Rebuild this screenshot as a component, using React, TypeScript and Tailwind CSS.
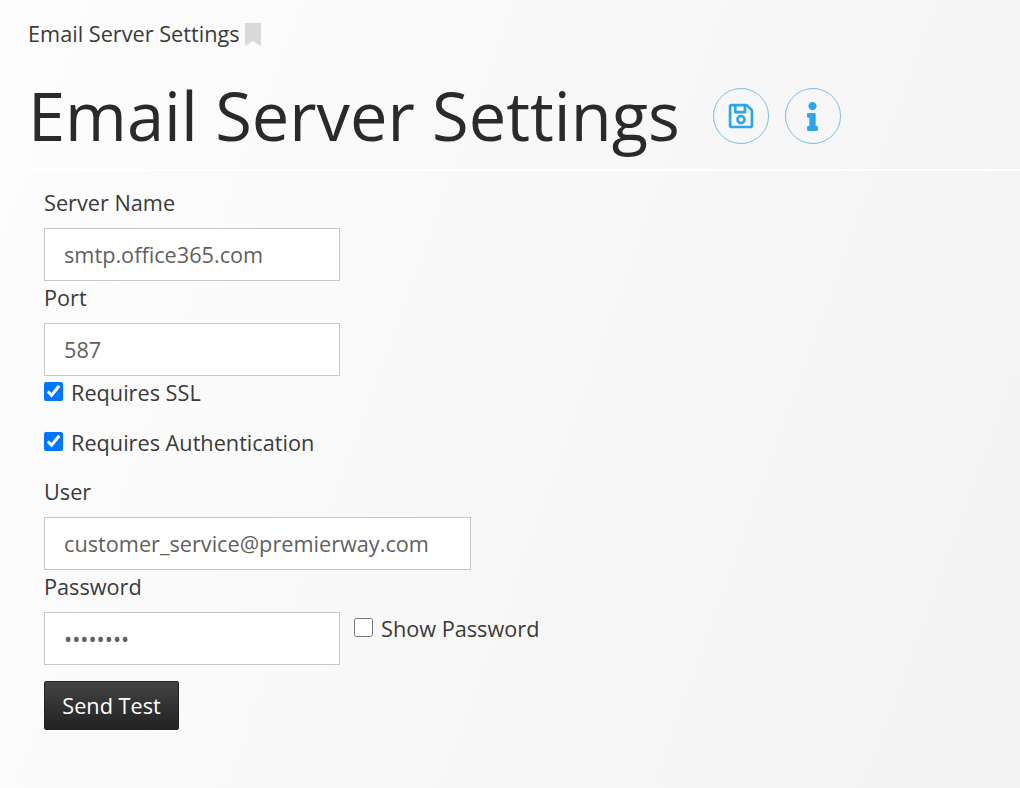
import React from "react";
import { FaRegSave, FaInfo } from "react-icons/fa";

function Field({ label, value, width, type = "text" }: { label: string; value: string; width: string; type?: string }) {
  return (
    <label className="block">
      <span className="block h-[42px] pt-[2px] text-[21.7px] leading-[30px] text-[#3a3a3a]">{label}</span>
      <input readOnly type={type} value={value} className={`block h-[53px] ${width} border border-[#c8c8c8] bg-white px-[19px] text-[21.7px] text-[#5f5f5f] outline-none`} />
    </label>
  );
}

function Check({ label, checked }: { label: string; checked: boolean }) {
  return (
    <label className="flex items-center gap-[8px] text-[21.7px] leading-[30px] text-[#3a3a3a]">
      <input readOnly type="checkbox" checked={checked} className="m-0 -mt-[3px] h-[19px] w-[19px] accent-[#0075ff]" />
      <span>{label}</span>
    </label>
  );
}

function RoundIcon({ children }: { children: React.ReactNode }) {
  return (
    <button className="flex h-[56px] w-[56px] items-center justify-center rounded-full border border-[#7dbde8] text-[#2ba6ec]">
      {children}
    </button>
  );
}

export default function App() {
  return (
    <div className="h-[788px] w-[1020px] overflow-hidden bg-[linear-gradient(110deg,#fdfdfd,#f3f3f3)] font-['Open_Sans',sans-serif]">
      <div className="flex h-[68px] items-start pl-[28px] pt-[19px]">
        <span className="text-[21.7px] leading-[30px] text-[#3a3a3a]">Email Server Settings</span>
        <svg viewBox="0 0 18 23" className="ml-[4px] mt-[4px] h-[23px] w-[18px]">
          <path d="M1 0h16v23l-8-5-8 5z" fill="#d9d9d9" />
        </svg>
      </div>
      <div className="ml-[28px] flex h-[103px] items-start border-b-2 border-white">
        <h1 className="text-[66.8px] font-normal leading-[96px] text-[#2a2a2a]">Email Server Settings</h1>
        <div className="ml-[33px] mt-[20px] flex gap-[16px]">
          <RoundIcon><FaRegSave size={28} /></RoundIcon>
          <RoundIcon><FaInfo size={29} /></RoundIcon>
        </div>
      </div>
      <div className="pl-[44px] pt-[15px]">
        <Field label="Server Name" value="smtp.office365.com" width="w-[296px]" />
        <Field label="Port" value="587" width="w-[296px]" />
        <div className="mt-[2px]">
          <Check label="Requires SSL" checked />
        </div>
        <div className="mt-[20px]">
          <Check label="Requires Authentication" checked />
        </div>
        <div className="mt-[17px]">
          <Field label="User" value="customer_service@premierway.com" width="w-[427px]" />
        </div>
        <div className="flex items-end">
          <Field label="Password" value="password" type="password" width="w-[296px]" />
          <div className="mb-[21px] ml-[14px]">
            <Check label="Show Password" checked={false} />
          </div>
        </div>
        <button className="mt-[16px] h-[49px] w-[135px] rounded-[2px] border border-[#222] bg-gradient-to-b from-[#444] to-[#222] pt-[1px] text-[21.7px] text-white">Send Test</button>
      </div>
    </div>
  );
}
